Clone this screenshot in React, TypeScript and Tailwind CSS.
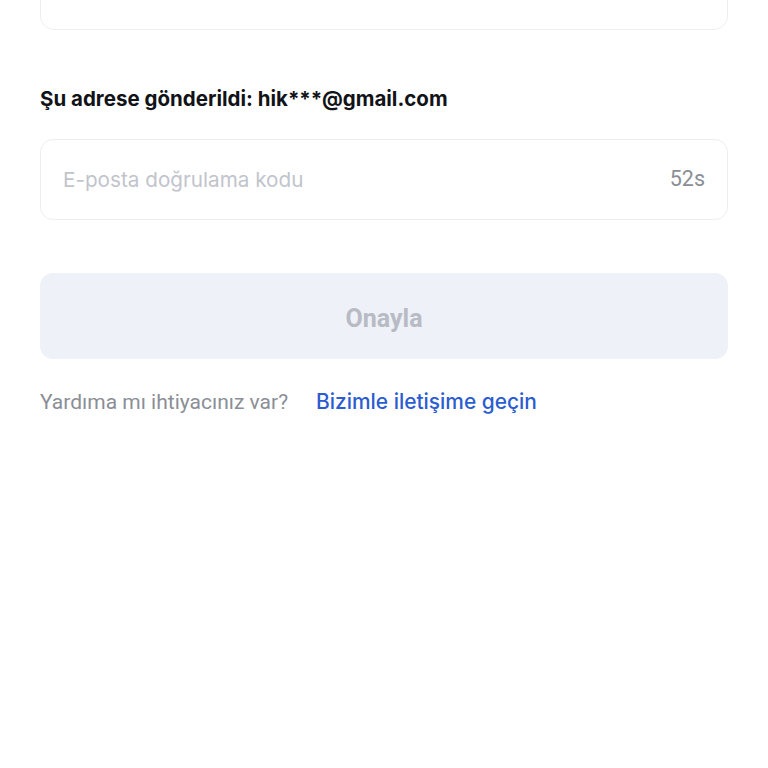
export default function App() {
  return (
    <div className="w-[768px] h-[768px] bg-white overflow-hidden relative" style={{ fontFamily: "Inter, 'Noto Sans', sans-serif" }}>
      <div className="px-[40px]">
        <div className="mt-[-60px] h-[90px] rounded-[14px] border-[1.5px] border-[#eceef1] bg-white" />
        <div className="mt-[55px] text-[20.5px] leading-[28px] font-bold text-[#121318]">
          Şu adrese gönderildi: hik***@gmail.com
        </div>
        <div className="mt-[26px] h-[81px] rounded-[13px] border-[1.5px] border-[#eceef1] flex items-center justify-between pl-[22px] pr-[22px]">
          <span className="text-[20.7px] text-[#c1c4cc]" style={{ fontFamily: "Inter, sans-serif" }}>E-posta doğrulama kodu</span>
          <span className="text-[21.5px] text-[#8b8e95]" style={{ fontFamily: "Roboto, sans-serif" }}>52s</span>
        </div>
        <div className="mt-[53px] h-[86px] rounded-[13px] bg-[#eef1f8] flex items-center justify-center pt-[5px]">
          <span className="text-[25px] font-bold text-[#b8bbc4]" style={{ fontFamily: "Roboto, sans-serif" }}>Onayla</span>
        </div>
        <div className="mt-[28px] flex items-center text-[21px] leading-[30px]" style={{ fontFamily: "Roboto, sans-serif" }}>
          <span className="text-[#8b8e95]">Yardıma mı ihtiyacınız var?</span>
          <span className="ml-[28px] text-[20.9px] text-[#2b5cd0] font-medium" style={{ fontFamily: "Inter, sans-serif" }}>Bizimle iletişime geçin</span>
        </div>
      </div>
    </div>
  );
}
